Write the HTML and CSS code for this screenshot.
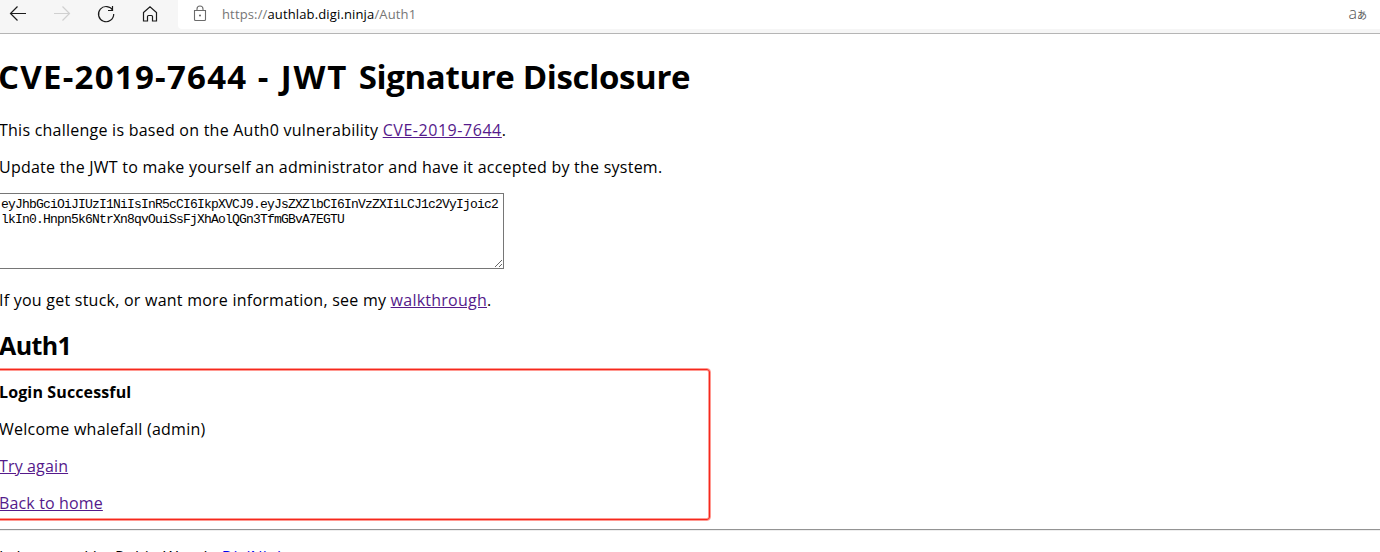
FILE: index.html
```html
<!DOCTYPE html>
<html lang="en">
<head>
<meta charset="utf-8">
<title>Auth1</title>
<link rel="stylesheet" href="styles.css">
</head>
<body>
<header class="toolbar">
  <nav class="nav">
    <svg class="icon" viewBox="0 0 20 20"><path d="M18 9.500H2.500M9.500 2.500l-7 7 7 7"/></svg>
    <svg class="icon disabled" viewBox="0 0 20 20"><path d="M2 9.500h15.500M10.500 2.500l7 7-7 7"/></svg>
    <svg class="icon" viewBox="0 0 20 20"><path d="M16.800 6.500A7.600 7.600 0 1 0 17.700 10M16.500 2v4.500h-4.500"/></svg>
    <svg class="icon" viewBox="0 0 20 20"><path d="M3.500 8.500 10 2.700l6.500 5.800v8.500h-4v-4.500a1 1 0 0 0-1-1h-3a1 1 0 0 0-1 1V17h-4z"/></svg>
  </nav>
  <div class="address">
    <svg class="lock" viewBox="0 0 14 18"><path d="M1.500 5.500h11v9a1 1 0 0 1-1 1h-9a1 1 0 0 1-1-1zM4 5.500V4a3 3 0 0 1 6 0v1.500"/><circle cx="7" cy="10.500" r=".5"/></svg>
    <span class="url">https://<b>authlab.digi.ninja</b>/Auth1</span>
    <span class="translate">a<small>あ</small></span>
  </div>
</header>
<main class="page">
  <h1><span class="number">CVE-2019-7644</span><span class="kind"> - JWT </span>Signature Disclosure</h1>
  <p class="intro">This challenge is based on the Auth0 vulnerability <a class="cve" href="#">CVE-2019-7644</a>.</p>
  <p class="update">Update the JWT to make yourself an administrator and have it accepted by the system.</p>
  <textarea class="token" spellcheck="false">eyJhbGciOiJIUzI1NiIsInR5cCI6IkpXVCJ9.eyJsZXZlbCI6InVzZXIiLCJ1c2VyIjoic2
lkIn0.Hnpn5k6NtrXn8qvOuiSsFjXhAolQGn3TfmGBvA7EGTU</textarea>
  <p class="help">If you get stuck, or want more information, see my <a href="#">walkthrough</a>.</p>
  <h2>Auth1</h2>
  <section class="result">
    <p class="status">Login Successful</p>
    <p>Welcome whalefall (admin)</p>
    <p class="action"><a href="#">Try again</a></p>
    <p class="action"><a href="#">Back to home</a></p>
    <div class="highlight"></div>
  </section>
  <hr>
  <p class="credit">Lab created by Robin Wood - <a class="new" href="#">DigiNinja</a></p>
</main>
</body>
</html>
```
FILE: styles.css
```css
* { box-sizing: border-box; }
body { margin: 0; height: 552px; overflow: hidden; background: #fff; color: #000; font-family: "Open Sans", "Noto Sans", sans-serif; font-size: 16px; }
.toolbar { display: flex; height: 34px; background: #f6f6f6; border-bottom: 1px solid #b5b5b5; }
.nav { display: flex; gap: 24px; width: 178px; padding: 4px 0 0 8px; }
.icon { width: 20px; height: 20px; fill: none; stroke: #1b1b1b; stroke-width: 1.2; }
.icon.disabled { stroke: #d0d0d0; }
.address { display: flex; flex: 1; height: 29px; padding: 0 13px 0 15px; background: #fff; border-radius: 0 0 0 4px; }
.lock { width: 14px; height: 18px; margin-top: 5px; fill: none; stroke: #6b6b6b; stroke-width: 1.1; }
.url { margin-left: 15px; color: #767676; font-size: 13px; line-height: 28px; letter-spacing: .14px; }
.url b { color: #000; font-weight: 400; }
.translate { margin-left: auto; color: #555; font: 300 16px/26px "Open Sans", "Noto Sans CJK JP", sans-serif; }
.translate small { font-size: 10px; font-weight: 400; }
.page { padding-top: 21px; }
h1, h2, p { margin: 0 0 0 -1px; white-space: nowrap; }
h1 { margin: 0 0 21px -2px; font-size: 33px; line-height: 44px; letter-spacing: -.35px; }
.number { letter-spacing: 1.25px; }
.kind { letter-spacing: 1.85px; }
p { margin-bottom: 16px; line-height: 21px; letter-spacing: .24px; }
a { color: #551a8b; }
a.new { color: #0000ee; }
.cve { letter-spacing: .55px; }
.update { margin-bottom: 15px; }
.token { display: block; width: 507px; height: 76px; margin: 0 0 21px -3px; padding: 3px 2px 2px 3px; border: 1px solid #767676; border-radius: 0; font: 13px/15px "Liberation Mono", monospace; letter-spacing: -.802px; white-space: pre; color: #000; overflow: hidden; }
.help { margin-bottom: 18px; }
h2 { margin-bottom: 21px; font-size: 25px; line-height: 32px; letter-spacing: -.6px; }
.result { position: relative; }
.status { font-weight: 700; letter-spacing: .13px; }
.action { letter-spacing: .14px; }
.highlight { position: absolute; left: -5px; top: -14px; width: 716px; height: 153px; border: 1px solid #ff9a92; border-radius: 4px; box-shadow: inset 0 0 0 1px #f4281e, inset 0 0 0 2px #ff9a92; }
hr { margin: -1px 0 16px; border: 0; height: 2px; border-top: 1px solid #949494; border-bottom: 1px solid #eee; }
.credit { letter-spacing: .15px; }
```
